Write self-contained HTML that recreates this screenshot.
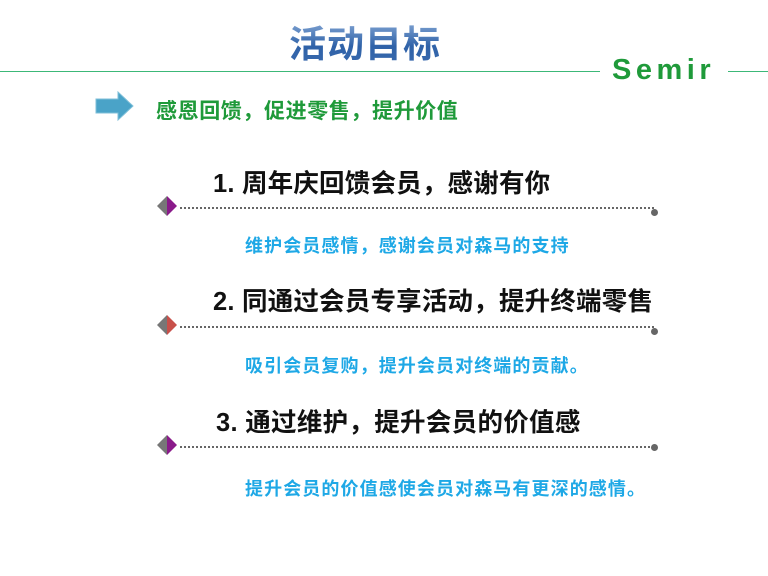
<!DOCTYPE html>
<html><head><meta charset="utf-8"><style>
body{margin:0;width:768px;height:576px;background:#fff;position:relative;overflow:hidden;font-family:"Liberation Sans","Noto Sans CJK SC",sans-serif;}
.a{position:absolute;white-space:nowrap;font-weight:bold;}
.h{font-size:25.5px;color:#111;letter-spacing:0.2px;}
.b{font-size:18px;color:#1ea8e6;letter-spacing:1.1px;}
.dl{position:absolute;height:0;border-top:2px dotted #666;}
.dot{position:absolute;width:7px;height:7px;border-radius:50%;background:#666;}
</style></head><body>
<div class="a" style="left:289px;top:14px;font-size:37px;letter-spacing:1px;background:linear-gradient(#9ab8e0,#2f62a8 60%,#3a6aae);-webkit-background-clip:text;color:transparent;">活动目标</div>
<div style="position:absolute;left:0;top:71px;width:600px;height:1px;background:#3cb878"></div>
<div style="position:absolute;left:728px;top:71px;width:40px;height:1px;background:#3cb878"></div>
<div class="a" style="left:612px;top:54px;font-size:29px;color:#1f9a3a;letter-spacing:4.5px">Semir</div>
<svg style="position:absolute;left:94px;top:90px" width="42" height="34"><path d="M2 9h22V2l15 14-15 14v-7H2z" fill="#4aa3c8" stroke="#7fbfd8"/></svg>
<div class="a" style="left:156px;top:95px;font-size:21px;color:#1f9a3a;letter-spacing:0.6px">感恩回馈，促进零售，提升价值</div>

<div class="a h" style="left:213px;top:163px">1. 周年庆回馈会员，感谢有你</div>
<svg style="position:absolute;left:156px;top:196px" width="22" height="20"><path d="M11 0L1 10l10 10z" fill="#777"/><path d="M11 0l10 10-10 10z" fill="#8a1a8a"/></svg>
<div class="dl" style="left:180px;top:207px;width:474px"></div><div class="dot" style="left:651px;top:209px"></div>
<div class="a b" style="left:245px;top:232px">维护会员感情，感谢会员对森马的支持</div>

<div class="a h" style="left:213px;top:281px">2. 同通过会员专享活动，提升终端零售</div>
<svg style="position:absolute;left:156px;top:315px" width="22" height="20"><path d="M11 0L1 10l10 10z" fill="#777"/><path d="M11 0l10 10-10 10z" fill="#c8504a"/></svg>
<div class="dl" style="left:180px;top:326px;width:474px"></div><div class="dot" style="left:651px;top:328px"></div>
<div class="a b" style="left:245px;top:352px">吸引会员复购，提升会员对终端的贡献。</div>

<div class="a h" style="left:216px;top:402px;letter-spacing:0.3px">3. 通过维护，提升会员的价值感</div>
<svg style="position:absolute;left:156px;top:435px" width="22" height="20"><path d="M11 0L1 10l10 10z" fill="#777"/><path d="M11 0l10 10-10 10z" fill="#8a1a8a"/></svg>
<div class="dl" style="left:180px;top:446px;width:474px"></div><div class="dot" style="left:651px;top:444px"></div>
<div class="a b" style="left:245px;top:475px">提升会员的价值感使会员对森马有更深的感情。</div>
</body></html>
